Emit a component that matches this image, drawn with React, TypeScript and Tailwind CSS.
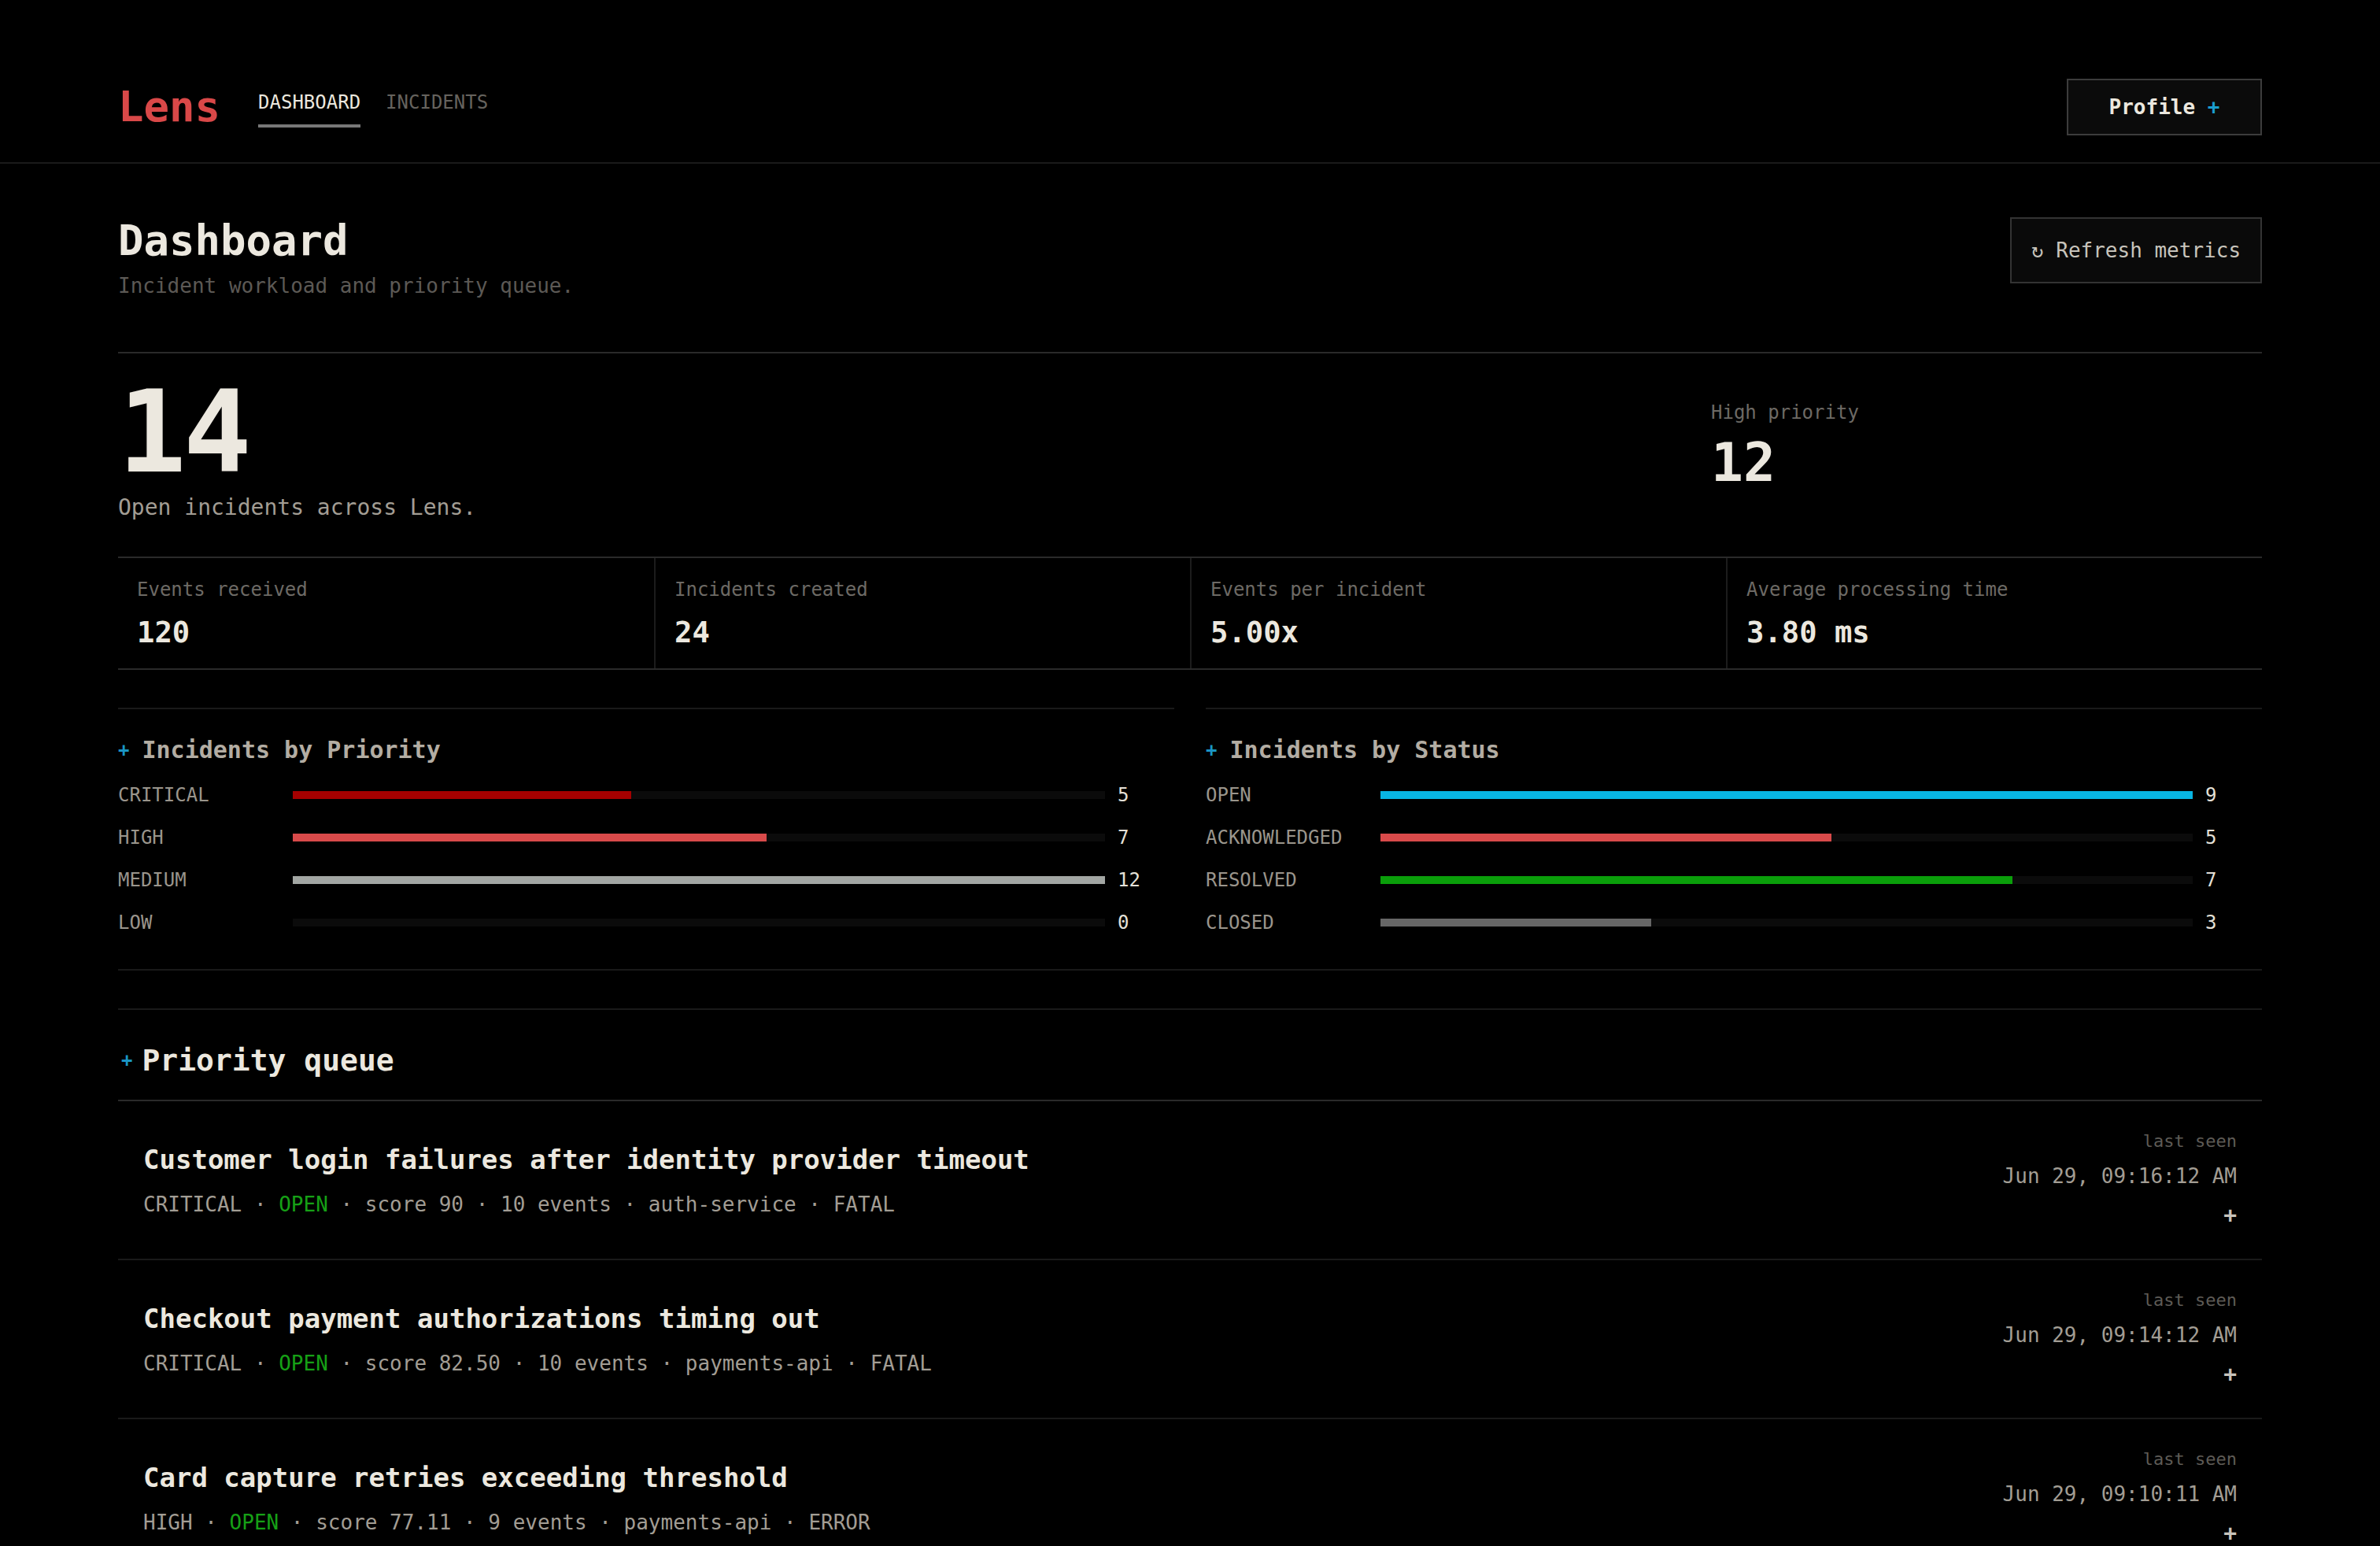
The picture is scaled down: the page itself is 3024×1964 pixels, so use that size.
const priorityBars = [
  { label: 'CRITICAL', value: 5, color: 'bg-[#a50000]' },
  { label: 'HIGH', value: 7, color: 'bg-[#d84a4a]' },
  { label: 'MEDIUM', value: 12, color: 'bg-[#a2a6a3]' },
  { label: 'LOW', value: 0, color: 'bg-[#444444]' },
]

const statusBars = [
  { label: 'OPEN', value: 9, color: 'bg-[#08b5e3]' },
  { label: 'ACKNOWLEDGED', value: 5, color: 'bg-[#d84a4a]' },
  { label: 'RESOLVED', value: 7, color: 'bg-[#0a9e0a]' },
  { label: 'CLOSED', value: 3, color: 'bg-[#666666]' },
]

const stats = [
  { label: 'Events received', value: '120' },
  { label: 'Incidents created', value: '24' },
  { label: 'Events per incident', value: '5.00x' },
  { label: 'Average processing time', value: '3.80 ms' },
]

const queue = [
  {
    title: 'Customer login failures after identity provider timeout',
    priority: 'CRITICAL',
    status: 'OPEN',
    score: '90',
    events: 10,
    service: 'auth-service',
    level: 'FATAL',
    lastSeen: 'Jun 29, 09:16:12 AM',
  },
  {
    title: 'Checkout payment authorizations timing out',
    priority: 'CRITICAL',
    status: 'OPEN',
    score: '82.50',
    events: 10,
    service: 'payments-api',
    level: 'FATAL',
    lastSeen: 'Jun 29, 09:14:12 AM',
  },
  {
    title: 'Card capture retries exceeding threshold',
    priority: 'HIGH',
    status: 'OPEN',
    score: '77.11',
    events: 9,
    service: 'payments-api',
    level: 'ERROR',
    lastSeen: 'Jun 29, 09:10:11 AM',
  },
]

type Bar = { label: string; value: number; color: string }

function BarPanel({ title, bars }: { title: string; bars: Bar[] }) {
  const max = Math.max(...bars.map((b) => b.value), 1)
  return (
    <div className="border-t border-[#1a1a1a] pt-[15px]">
      <h3 className="flex items-center gap-2 text-[15px] leading-[22px] font-bold text-[#b3ada3]">
        <span className="text-xs text-[#1a95c4]">+</span>
        {title}
      </h3>
      <ul className="mt-1">
        {bars.map((b) => (
          <li key={b.label} className="flex h-[27px] items-center">
            <span className="w-[111px] text-xs text-[#9a958c]">{b.label}</span>
            <div className="flex h-[5px] flex-1 bg-[#0b0b0b]">
              <div
                className={`h-full ${b.color}`}
                style={{ width: `${(b.value / max) * 100}%` }}
              />
            </div>
            <span className="w-[44px] pl-2 text-xs text-[#e4e0d8]">{b.value}</span>
          </li>
        ))}
      </ul>
    </div>
  )
}

export default function App() {
  return (
    <div className="min-h-screen bg-black">
      <div className="[zoom:2] font-['DejaVu_Sans_Mono','Liberation_Mono',monospace] text-[#ece8df]">
        <header className="flex items-center justify-between border-b border-[#1a1a1a] px-[75px] pt-[50px] pb-[17px]">
          <div className="flex items-center gap-6">
            <span className="text-[27px] leading-none font-bold text-[#d94848]">Lens</span>
            <nav className="flex items-center gap-4 text-xs">
              <a className="border-b-2 border-[#777777] pt-[2px] pb-[6px] text-[#ece8df]">DASHBOARD</a>
              <a className="border-b-2 border-transparent pt-[2px] pb-[6px] text-[#66635e]">INCIDENTS</a>
            </nav>
          </div>
          <button className="h-9 w-[124px] border border-[#3c3c3c] bg-[#0b0b0b] text-[13px] font-bold">
            Profile <span className="text-[#1a9fd0]">+</span>
          </button>
        </header>

        <main className="px-[75px] pt-8">
          <div className="flex items-start justify-between pb-8">
            <div>
              <h1 className="text-[27px] leading-[1.25] font-bold">Dashboard</h1>
              <p className="mt-0.5 text-[13px] text-[#5c5955]">
                Incident workload and priority queue.
              </p>
            </div>
            <button className="mt-[2px] h-[42px] w-[160px] border border-[#333333] bg-[#0a0a0a] text-[13px] text-[#c8c4bc]">
              ↻ Refresh metrics
            </button>
          </div>

          <section className="grid grid-cols-[1fr_350px] items-center border-t border-[#2a2a2a] pt-[14px] pb-[21px]">
            <div>
              <div className="text-7xl leading-none font-bold tracking-tight">14</div>
              <p className="mt-[2px] text-sm text-[#a29d94]">Open incidents across Lens.</p>
            </div>
            <div className="pb-[6px]">
              <div className="text-xs text-[#6d6a65]">High priority</div>
              <div className="mt-[7px] text-[34px] leading-none font-bold">12</div>
            </div>
          </section>

          <section className="grid grid-cols-4 border-y border-[#2a2a2a]">
            {stats.map((s, i) => (
              <div
                key={s.label}
                className={i === 0 ? 'px-3 py-3' : 'border-l border-[#1c1c1c] px-3 py-3'}
              >
                <div className="text-xs text-[#6d6a65]">{s.label}</div>
                <div className="mt-2 text-[18.6px] leading-[1.2] font-bold">{s.value}</div>
              </div>
            ))}
          </section>

          <section className="mt-6 grid grid-cols-2 gap-5 border-b border-[#1a1a1a] pb-4">
            <BarPanel title="Incidents by Priority" bars={priorityBars} />
            <BarPanel title="Incidents by Status" bars={statusBars} />
          </section>

          <section className="mt-6 border-t border-[#1a1a1a]">
            <h2 className="flex items-center gap-[6px] pt-[18px] pb-[11px] pl-[2px] text-[19px] leading-[28px] font-bold">
              <span className="text-xs text-[#1a95c4]">+</span>
              Priority queue
            </h2>
            <ul className="border-t border-[#2a2a2a]">
              {queue.map((q) => (
                <li
                  key={q.title}
                  className="flex items-center justify-between border-b border-[#1a1a1a] px-4 py-[17.5px]"
                >
                  <div>
                    <div className="text-[17px] leading-[1.5] font-bold">{q.title}</div>
                    <div className="mt-1.5 text-[13px] leading-[1.5] text-[#a29d94]">
                      {q.priority} · <span className="text-[#16a016]">{q.status}</span> · score{' '}
                      {q.score} · {q.events} events · {q.service} · {q.level}
                    </div>
                  </div>
                  <div className="flex flex-col items-end">
                    <span className="text-[11px] leading-4 text-[#5e5b56]">last seen</span>
                    <span className="mt-1 text-[13px] leading-5 text-[#a29d94]">{q.lastSeen}</span>
                    <span className="mt-[5px] text-sm leading-5 font-bold text-[#c8c4bc]">+</span>
                  </div>
                </li>
              ))}
            </ul>
          </section>
        </main>
      </div>
    </div>
  )
}
